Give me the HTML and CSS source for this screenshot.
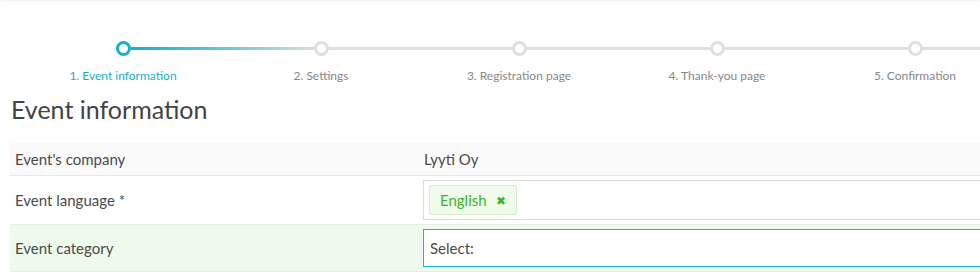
FILE: index.html
```html
<!DOCTYPE html>
<html lang="en">
<head>
<meta charset="utf-8">
<title>Event information</title>
<link rel="stylesheet" href="styles.css">
</head>
<body>
<div class="topbar"></div>
<nav class="stepper">
  <div class="step active">
    <div class="track"><span class="seg none"></span><span class="dot"></span><span class="seg grad-a"></span></div>
    <div class="label">1. Event information</div>
  </div>
  <div class="step">
    <div class="track"><span class="seg grad-b"></span><span class="dot"></span><span class="seg"></span></div>
    <div class="label">2. Settings</div>
  </div>
  <div class="step">
    <div class="track"><span class="seg"></span><span class="dot"></span><span class="seg"></span></div>
    <div class="label">3. Registration page</div>
  </div>
  <div class="step">
    <div class="track"><span class="seg"></span><span class="dot"></span><span class="seg"></span></div>
    <div class="label">4. Thank-you page</div>
  </div>
  <div class="step">
    <div class="track"><span class="seg"></span><span class="dot"></span><span class="seg"></span></div>
    <div class="label">5. Confirmation</div>
  </div>
</nav>
<h1 class="title">Event information</h1>
<div class="form">
  <div class="row grey">
    <div class="key">Event's company</div>
    <div class="val text">Lyyti Oy</div>
  </div>
  <div class="row">
    <div class="key">Event language *</div>
    <div class="val"><div class="input"><span class="tag">English <span class="x">&#x2716;</span></span></div></div>
  </div>
  <div class="row green">
    <div class="key">Event category</div>
    <div class="val"><div class="select">Select:</div></div>
  </div>
</div>
</body>
</html>
```
FILE: styles.css
```css
html, body {
  margin: 0;
  padding: 0;
  background: #fff;
  overflow: hidden;
  width: 980px;
  height: 275px;
  font-family: "Lato", "Open Sans", sans-serif;
  color: #444;
}
.topbar {
  height: 0;
  box-shadow: 0 0 3px 1px rgba(0,0,0,0.08);
}
.stepper {
  display: flex;
  margin: 40px 0 0 24px;
  width: 1200px;
}
.step {
  width: 198px;
  flex: none;
  display: flex;
  flex-direction: column;
  align-items: center;
}
.track {
  display: flex;
  align-items: center;
  width: 100%;
  height: 16px;
}
.seg {
  flex: 1;
  height: 3px;
  background: #dfdfdf;
}
.seg.none { background: transparent; }
.seg.grad-a { background: linear-gradient(to right, #14b2ca, #6cc4d2); }
.seg.grad-b { background: linear-gradient(to right, #6cc4d2, #dcdcdc); }
.dot {
  width: 9px;
  height: 9px;
  border: 3px solid #dfdfdf;
  border-radius: 50%;
  background: #fff;
  flex: none;
}
.step.active .dot { border-color: #14b2ca; }
.label {
  margin-top: 12px;
  font-size: 12px;
  line-height: 16px;
  color: #888;
  white-space: nowrap;
}
.step.active .label { color: #19aecb; }
.title {
  margin: 10px 0 0 11px;
  font-size: 25px;
  line-height: 30px;
  font-weight: normal;
  color: #444;
}
.form {
  margin: 19px 0 0 10px;
  width: 1010px;
}
.row {
  display: flex;
  align-items: center;
  border-bottom: 1px solid #e9e9e9;
  font-size: 15px;
}
.row.grey { background: #fafafa; height: 32px; }
.row.green { background: #eefaeb; }
.key {
  width: 399px;
  flex: none;
  padding: 0 5px;
  color: #4a4a4a;
}
.val {
  flex: 1;
  padding: 4px;
  color: #4a4a4a;
}
.val.text { padding-left: 5px; }
.input {
  height: 38px;
  border: 1px solid #dcdcdc;
  background: #fff;
  display: flex;
  align-items: center;
  padding-left: 5px;
}
.tag {
  display: inline-flex;
  align-items: center;
  height: 28px;
  padding: 0 10px;
  border: 1px solid #d3f0c8;
  border-radius: 2px;
  background: #f0fbec;
  color: #3db324;
  font-size: 15px;
}
.x {
  font-size: 12px;
  margin-left: 9px;
  color: #3db324;
}
.select {
  height: 36px;
  border: 1px solid #15b8d2;
  background: #fff;
  display: flex;
  align-items: center;
  padding-left: 6px;
  color: #4a4a4a;
}
```
